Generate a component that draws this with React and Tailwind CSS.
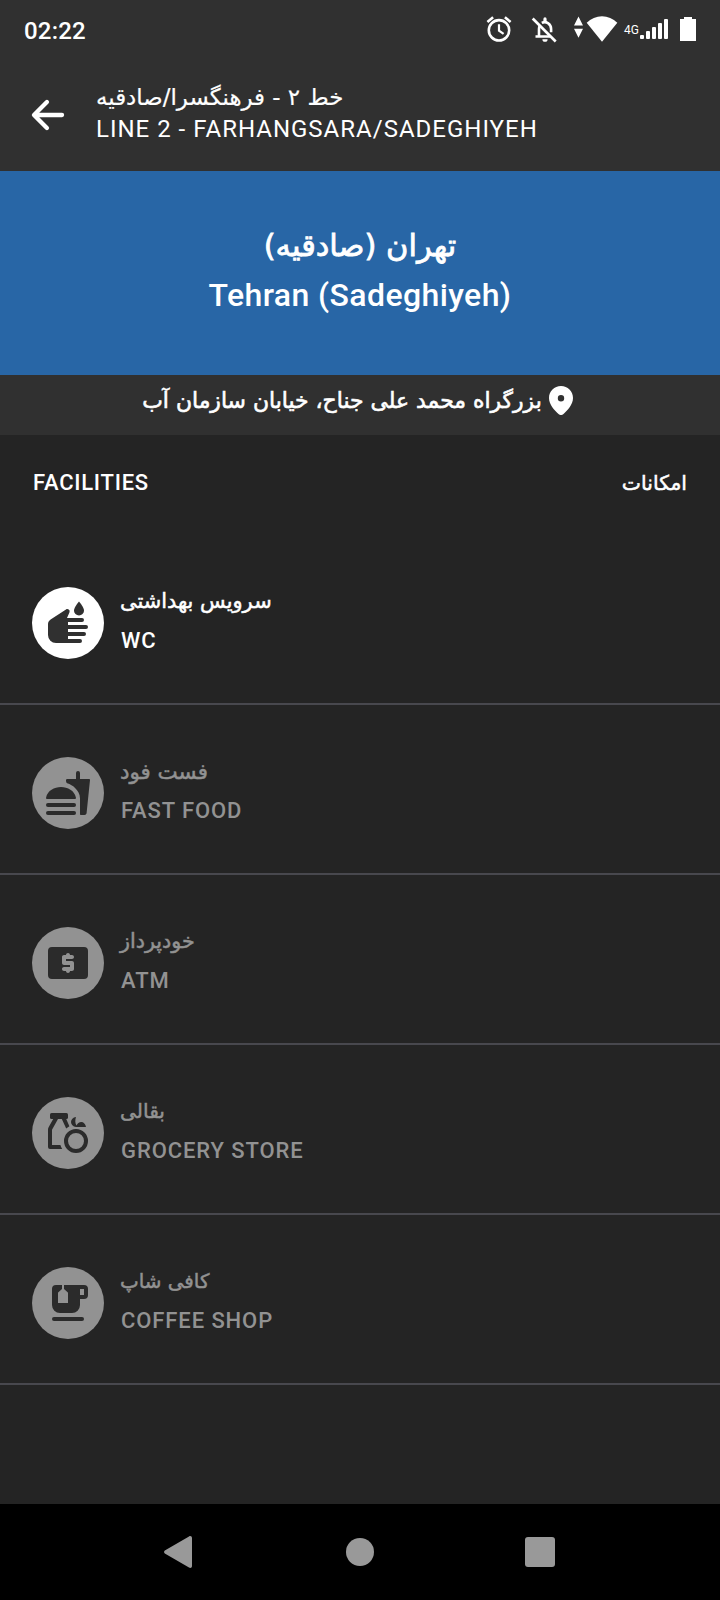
import React from "react";
import { IoArrowBack } from "react-icons/io5";

function StatusBar() {
  return (
    <div className="flex h-[58px] items-start pl-6 pr-6">
      <span className="mt-[16px] text-[24px] leading-[30px] font-medium tracking-[0.2px]">02:22</span>
      <div className="ml-auto flex items-start">
        <svg className="mt-[14px] size-[30px]" viewBox="0 0 30 30" fill="none" stroke="currentColor" strokeWidth="2.600">
          <circle cx="15" cy="16.300" r="10.200" />
          <path d="M15 10.300v6.400l4.600 3.200" strokeWidth="2.200" />
          <path d="M3.400 8l5.700-4.700M26.600 8l-5.700-4.700" />
        </svg>
        <svg
          className="mt-[14px] ml-[13px] size-[31px]"
          viewBox="0 0 31 31"
          fill="none"
          stroke="currentColor"
          strokeWidth="2.600"
        >
          <path d="M5.700 4.500l23 23" />
          <path d="M8.500 22.500h14.500M12 22v-7c0-1.300.3-2.500.9-3.500M14.800 8.900c4-2.100 9.300.5 9.300 6.100v3.300" />
          <path d="M16.400 8V4.900a1.600 1.600 0 0 1 3.200 0V8zM15.400 25.200h5.200a2.600 2.600 0 0 1-5.200 0z" fill="currentColor" stroke="none" />
        </svg>
        <svg className="mt-[16px] ml-[16px] h-[22px] w-[9px]" viewBox="0 0 9 22" fill="currentColor">
          <path d="M4.500 .5L9 9.500H0zM0 12.800h9l-4.500 9z" />
        </svg>
        <svg className="mt-[16px] ml-[3px] h-[26px] w-[32px]" viewBox="0 0 32 26" fill="currentColor">
          <path d="M16 25.700L.7 6.800C5 2.500 10.200 .3 16 .3s11 2.200 15.300 6.500z" />
        </svg>
        <span className="mt-[22px] ml-[6px] w-[15px] text-[12px] leading-[16px]">4G</span>
        <svg className="mt-[19px] ml-[1px] h-[20px] w-[28px]" viewBox="0 0 28 20" fill="currentColor">
          <rect x="0" y="16" width="4" height="4" rx="1" />
          <rect x="6" y="12" width="4" height="8" rx="1" />
          <rect x="12" y="8" width="4" height="12" rx="1" />
          <rect x="18" y="4" width="4" height="16" rx="1" />
          <rect x="24" y="0" width="4" height="20" rx="1" />
        </svg>
        <svg className="mt-[17px] ml-[12px] h-[24px] w-[16px]" viewBox="0 0 16 24" fill="currentColor">
          <path d="M4 0h8v2h4v22H0V2h4z" />
        </svg>
      </div>
    </div>
  );
}

function Farsi({ className, children }) {
  return (
    <span dir="rtl" lang="fa" className={`block whitespace-nowrap font-['DejaVu_Sans',sans-serif] ${className}`}>
      {children}
    </span>
  );
}

const icons = {
  wc: (
    <>
      <path d="M2 12.600c0-1 .5-1.900 1.300-2.400l7.700-5c.5-.3 1.100-.2 1.500.2.350.35.4.8.2 1.300L11.500 9.500H19a1 1 0 0 1 0 2h-7V13h9a1 1 0 0 1 0 2h-9v1.500h8a1 1 0 0 1 0 2h-8V20h6a1 1 0 0 1 0 2H6a4 4 0 0 1-4-4z" />
      <path d="M17.500 1.200S15 4 15 5.750a2.500 2.500 0 0 0 5 0C20 4 17.500 1.200 17.500 1.200z" />
    </>
  ),
  fastFood: (
    <>
      <path d="M1.700 15c-.5 0-.75-.35-.65-.8C1.800 10.800 5.150 9 8.500 9s6.700 1.800 7.450 5.200c.1.450-.15.8-.65.8z" />
      <rect x="1" y="17" width="15" height="2" rx="1" />
      <rect x="1" y="21" width="15" height="2" rx="1" />
      <path d="M17 1a1 1 0 0 0-1 1v3h-4.400c-.35 0-.6.3-.6.650l.1.900c.05.3.25.5.5.600 1.500.5 2.900 1.300 3.800 2.200C16.900 10.800 18 12.400 18 14.800v7.700c0 .3.2.5.5.5h1.700c.6 0 1.050-.4 1.100-1L23 5.500c0-.3-.2-.5-.5-.5H18V2a1 1 0 0 0-1-1z" />
    </>
  ),
  atm: (
    <path
      fillRule="evenodd"
      d="M4 4h16a2 2 0 0 1 2 2v12a2 2 0 0 1-2 2H4a2 2 0 0 1-2-2V6a2 2 0 0 1 2-2zM12 17c.55 0 1-.45 1-1h1c.55 0 1-.45 1-1v-3c0-.55-.45-1-1-1h-3v-1h3c.55 0 1-.45 1-1s-.45-1-1-1h-1c0-.55-.45-1-1-1s-1 .45-1 1h-1c-.55 0-1 .45-1 1v3c0 .55.45 1 1 1h3v1h-3c-.55 0-1 .45-1 1s.45 1 1 1h1c0 .55.45 1 1 1z"
    />
  ),
  grocery: (
    <>
      <rect x="3" y="2" width="9" height="3" rx=".8" />
      <path d="M4.600 5L2.300 9.100A3 3 0 0 0 2 10.500V19a1 1 0 0 0 1 1h6.100a8 8 0 0 1-.9-2H4v-7.600L7 5zM8.900 5l2.200 4.800 1.600-1.200L11.100 5z" />
      <path fillRule="evenodd" d="M16 10a6 6 0 1 0 0 12 6 6 0 0 0 0-12zm0 2a4 4 0 1 1 0 8 4 4 0 0 1 0-8z" />
      <path d="M16 4c-1.500.2-2.500 1.300-2.500 2.500S14.500 8.800 16 9h5c-.2-1.500-1.200-2.500-2.400-2.500-1 0-1.900.7-2.300 1.700C15.500 7.300 15.500 5.500 16 4z" />
    </>
  ),
  coffee: (
    <>
      <path
        fillRule="evenodd"
        d="M6 3h3v2L7.200 6.600A.7.700 0 0 0 7 7v5h5V7a.7.700 0 0 0-.2-.4L10 5V3h10a2 2 0 0 1 2 2v3a2 2 0 0 1-2 2h-2v3a4 4 0 0 1-4 4H8a4 4 0 0 1-4-4V5a2 2 0 0 1 2-2zM18 5v3h2V5z"
      />
      <rect x="4" y="19" width="16" height="2" rx="1" />
    </>
  ),
};

const facilities = [
  { id: "wc", fa: "سرویس بهداشتی", en: "WC", size: "text-[20.9px]", available: true },
  { id: "fastFood", fa: "فست فود", en: "FAST FOOD", size: "text-[21.4px]" },
  { id: "atm", fa: "خودپرداز", en: "ATM", size: "text-[20.7px]" },
  { id: "grocery", fa: "بقالی", en: "GROCERY STORE", size: "text-[20.2px]" },
  { id: "coffee", fa: "کافی شاپ", en: "COFFEE SHOP", size: "text-[19.9px]" },
];

function Facility({ item }) {
  return (
    <li
      className={`flex h-[170px] border-b-2 border-[#48484e] pt-[52px] pl-8 ${
        item.available ? "text-white" : "text-[#929292]"
      }`}
    >
      <span className="flex size-[72px] items-center justify-center rounded-full bg-current">
        <svg
          className={`size-12 ${item.available ? "text-[#303030]" : "text-[#2b2b2b]"}`}
          viewBox="0 0 24 24"
          fill="currentColor"
        >
          {icons[item.id]}
        </svg>
      </span>
      <div className="ml-4 flex flex-col items-start">
        <Farsi className={`${item.size} leading-[29px] [-webkit-text-stroke:0.5px]`}>{item.fa}</Farsi>
        <span className="mt-[11px] ml-[1px] text-[22px] leading-[28px] font-medium tracking-[0.900px]">{item.en}</span>
      </div>
    </li>
  );
}

export default function App() {
  return (
    <div className="flex h-[1600px] w-[720px] flex-col overflow-hidden bg-[#242424] font-['Roboto',sans-serif] text-white">
      <header className="h-[171px] bg-[#303030]">
        <StatusBar />
        <div className="flex pl-[25px]">
          <IoArrowBack className="mt-[34px] size-[46px]" />
          <div className="ml-[25px] flex flex-col items-start pt-[23px]">
            <Farsi className="h-[32px] text-[22.900px] leading-[32px] [-webkit-text-stroke:0.2px]">
              خط ۲ - فرهنگسرا/صادقیه
            </Farsi>
            <span className="text-[24px] leading-[32px] tracking-[1px]">LINE 2 - FARHANGSARA/SADEGHIYEH</span>
          </div>
        </div>
      </header>

      <section className="flex h-[204px] flex-col items-center bg-[#2866a6] pt-[51px]">
        <Farsi className="text-[30.500px] leading-[48px] [-webkit-text-stroke:0.8px]">تهران (صادقیه)</Farsi>
        <h1 className="mt-[1px] text-[32px] leading-[48px] font-medium tracking-[0.400px]">Tehran (Sadeghiyeh)</h1>
      </section>

      <div className="flex h-[60px] items-start justify-center bg-[#303030] pr-[5px]">
        <Farsi className="mt-[10px] text-[21.900px] leading-[32px] [-webkit-text-stroke:0.6px]">
          بزرگراه محمد علی جناح، خیابان سازمان آب
        </Farsi>
        <svg className="mt-[11px] ml-[7px] h-[29px] w-[24px]" viewBox="0 0 24 29" fill="currentColor">
          <path
            fillRule="evenodd"
            d="M12 0C5.300 0 0 5.200 0 12c0 6.500 5.600 12.600 9.800 16.200 1.300 1.100 3.100 1.100 4.400 0C18.400 24.600 24 18.500 24 12 24 5.200 18.700 0 12 0zm0 9a3.200 3.200 0 1 1 0 6.400A3.200 3.200 0 0 1 12 9z"
          />
        </svg>
      </div>

      <div className="flex h-[100px] items-start justify-between pt-[34px] pr-[33px] pl-[33px]">
        <h2 className="text-[22px] leading-[28px] font-medium tracking-[0.750px]">FACILITIES</h2>
        <Farsi className="text-[20.400px] leading-[28px] [-webkit-text-stroke:0.5px]">امکانات</Farsi>
      </div>

      <ul>
        {facilities.map((item) => (
          <Facility key={item.id} item={item} />
        ))}
      </ul>

      <nav className="mt-auto flex h-24 items-center justify-between bg-black pr-[165px] pl-[164px] text-[#999999]">
        <svg className="h-8 w-7" viewBox="0 0 28 32" fill="currentColor">
          <path d="M.8 14.600L25 .4c1.500-.9 3-.1 3 1.600v28c0 1.700-1.500 2.500-3 1.600L.8 17.400c-1-.7-1-2.100 0-2.800z" />
        </svg>
        <span className="ml-[2px] size-7 rounded-full bg-current" />
        <span className="size-[30px] rounded-[3px] bg-current" />
      </nav>
    </div>
  );
}
